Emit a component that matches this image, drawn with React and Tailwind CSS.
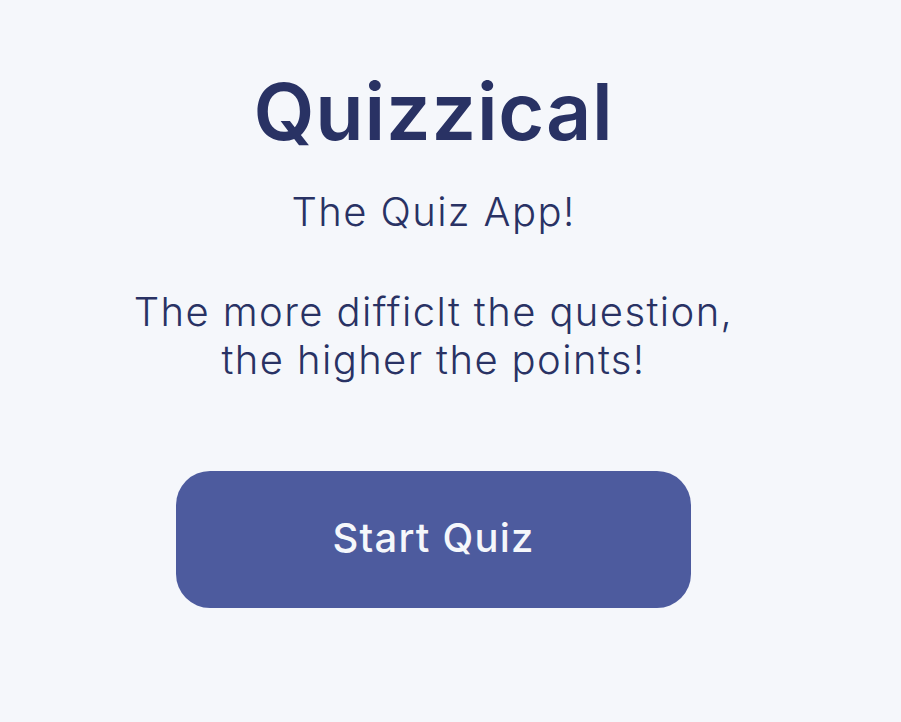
export default function App() {
  return (
    <div className="min-h-[722px] w-full bg-[#F5F7FB] font-['Inter','Noto_Sans',sans-serif] text-[#293264]">
      <main className="flex flex-col items-center pr-[34px] pt-[72px] text-center">
        <h1 className="text-[79px] font-semibold leading-none tracking-[0.01em]">Quizzical</h1>
        <p className="mt-[37px] text-[40px] font-light leading-[48px] tracking-[0.035em]">The Quiz App!</p>
        <p className="mt-[52px] text-[40px] font-light leading-[48px] tracking-[0.035em]">
          The more difficlt the question,
          <br />
          the higher the points!
        </p>
        <button className="mt-[87px] h-[137px] w-[515px] rounded-[34px] bg-[#4D5B9E] pb-1 text-[40px] font-medium tracking-[0.03em] text-[#F5F7FB]">
          Start Quiz
        </button>
      </main>
    </div>
  )
}
